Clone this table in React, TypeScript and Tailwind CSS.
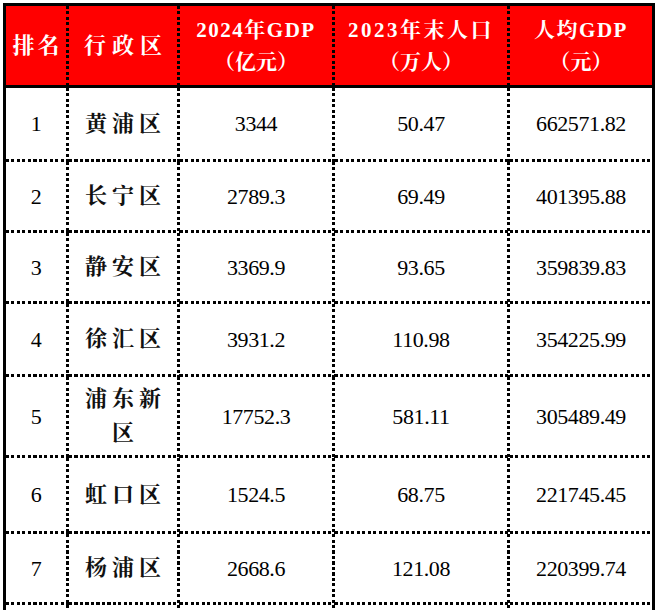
import React from "react";

type Row = { rank: string; name: string; gdp: string; pop: string; per: string; h: string };

const rows: Row[] = [
  { rank: "1", name: "黄浦区", gdp: "3344", pop: "50.47", per: "662571.82", h: "h-[74px]" },
  { rank: "2", name: "长宁区", gdp: "2789.3", pop: "69.49", per: "401395.88", h: "h-[71px]" },
  { rank: "3", name: "静安区", gdp: "3369.9", pop: "93.65", per: "359839.83", h: "h-[71px]" },
  { rank: "4", name: "徐汇区", gdp: "3931.2", pop: "110.98", per: "354225.99", h: "h-[73px]" },
  { rank: "5", name: "浦东新区", gdp: "17752.3", pop: "581.11", per: "305489.49", h: "h-[81px]" },
  { rank: "6", name: "虹口区", gdp: "1524.5", pop: "68.75", per: "221745.45", h: "h-[76px]" },
  { rank: "7", name: "杨浦区", gdp: "2668.6", pop: "121.08", per: "220399.74", h: "h-[71px]" },
];

// dotted rules drawn as repeating gradients so the dots come out square
const vDots =
  "bg-[image:repeating-linear-gradient(to_bottom,#000_0_3px,transparent_3px_5.5px)] bg-no-repeat bg-[length:3px_100%] bg-[position:right_top]";
const bothDots =
  "bg-[image:repeating-linear-gradient(to_bottom,#000_0_3px,transparent_3px_5.5px),repeating-linear-gradient(to_right,#000_0_3px,transparent_3px_5.5px)] bg-no-repeat bg-[length:3px_100%,100%_3px] bg-[position:right_top,left_bottom]";
const bottomDots =
  "bg-[image:repeating-linear-gradient(to_right,#000_0_3px,transparent_3px_5.5px)] bg-no-repeat bg-[length:100%_3px] bg-[position:left_bottom]";

const widths = ["w-[63px]", "w-[111px]", "w-[155px]", "w-[175px]", "w-[142px]"];

const font = "font-['Liberation_Serif','Noto_Serif_CJK_SC','Noto_Sans_CJK_SC',serif]";

function HeadCell({ i, children }: { i: number; children: React.ReactNode }) {
  return (
    <div
      className={`${widths[i]} ${i < 4 ? vDots + " pr-[3px]" : ""} h-full shrink-0 flex items-center justify-center text-center`}
    >
      {children}
    </div>
  );
}

function Cell({ i, children, cjk }: { i: number; children: React.ReactNode; cjk?: boolean }) {
  const pad = cjk ? "pl-3 pr-[15px]" : i < 4 ? "pr-[3px]" : "";
  return (
    <div
      className={`${widths[i]} ${i < 4 ? bothDots : bottomDots} ${pad} h-full shrink-0 flex items-center justify-center text-center pb-[3px] ${
        cjk ? "text-[22px] font-bold tracking-[5px] leading-[34px]" : "text-[22px] tracking-[-0.4px] text-black"
      }`}
    >
      <span className={cjk ? "-mr-[5px]" : ""}>{children}</span>
    </div>
  );
}

export default function App() {
  return (
    <div className={`w-[660px] h-[610px] overflow-hidden bg-white ${font}`}>
      <div className="ml-[3px] mt-[3px] w-[652px] border-[3px] border-b-0 border-black text-[#111]">
        <div className="flex h-[82px] bg-[#ff0000] border-b-[3px] border-black text-white font-bold text-[21px] leading-[32px]">
          <HeadCell i={0}>
            <span className="text-[22px] tracking-[3px] -mr-[3px]">排名</span>
          </HeadCell>
          <HeadCell i={1}>
            <span className="text-[22px] tracking-[6px] -mr-[6px]">行政区</span>
          </HeadCell>
          <HeadCell i={2}>
            <div>
              <div className="tracking-[1.5px]">2024年GDP</div>
              <div>（亿元）</div>
            </div>
          </HeadCell>
          <HeadCell i={3}>
            <div>
              <div className="tracking-[2.5px]">2023年末人口</div>
              <div>（万人）</div>
            </div>
          </HeadCell>
          <HeadCell i={4}>
            <div>
              <div className="tracking-[1.5px]">人均GDP</div>
              <div>（元）</div>
            </div>
          </HeadCell>
        </div>
        {rows.map((r) => (
          <div key={r.rank} className={`flex ${r.h}`}>
            <Cell i={0}>{r.rank}</Cell>
            <Cell i={1} cjk>
              {r.name}
            </Cell>
            <Cell i={2}>{r.gdp}</Cell>
            <Cell i={3}>{r.pop}</Cell>
            <Cell i={4}>{r.per}</Cell>
          </div>
        ))}
        <div className="flex h-[40px]">
          {widths.map((w, i) => (
            <div key={i} className={`${w} ${i < 4 ? vDots : ""} h-full shrink-0`} />
          ))}
        </div>
      </div>
    </div>
  );
}
